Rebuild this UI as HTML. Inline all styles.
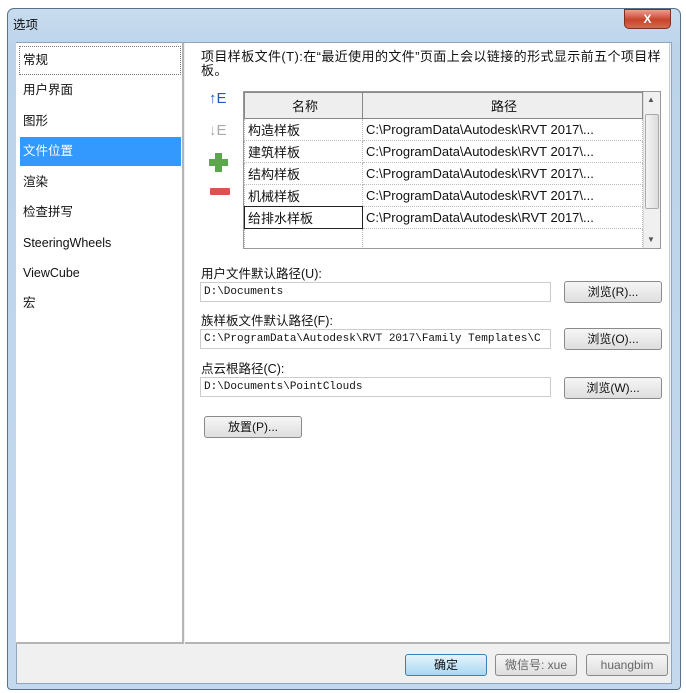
<!DOCTYPE html>
<html><head><meta charset="utf-8"><style>
*{margin:0;padding:0;box-sizing:border-box}
body{width:686px;height:693px;background:#fff;position:relative;overflow:hidden;font-family:"Liberation Sans","Noto Sans CJK SC",sans-serif;font-size:12.5px;color:#111}
.a{position:absolute}
.frame{left:7px;top:8px;width:674px;height:682px;border:1px solid #5a7088;border-radius:7px 7px 4px 4px;background:linear-gradient(#c9dcef,#bcd3ea 40px,#c4d9ee);}
.in{left:16px;top:42px;width:656px;height:642px;background:#f0f0f0;border:1px solid #8ea6bf}
.left{left:16px;top:43px;width:168px;height:601px;background:#fff;border-right:2px solid #b5b5b5;border-bottom:2px solid #b5b5b5}
.right{left:185px;top:43px;width:485px;height:601px;background:#fff;border-bottom:2px solid #b5b5b5;border-right:1px solid #ccc}
.it{position:absolute;left:20px;width:161px;height:29px;line-height:29px;padding-left:3px;font-size:12.5px}
.sel{background:#3399ff;color:#fff}
table{border-collapse:collapse;font-size:13px}
td{height:22px;border:1px dotted #bbb;padding-left:3px;white-space:nowrap;overflow:hidden}
.inp{position:absolute;left:200px;width:351px;height:20px;border:1px solid #ccc;background:#fff;font-family:"Liberation Mono","Noto Serif CJK SC",monospace;font-size:11px;line-height:18px;padding-left:3px;white-space:nowrap;overflow:hidden}
.btn{position:absolute;height:22px;border:1px solid #8a8a8a;border-radius:3px;background:linear-gradient(#f6f6f6,#dedede);text-align:center;line-height:20px;font-size:12px}
.lbl{position:absolute;left:201px;font-size:12.5px}
</style></head><body>
<div class="a frame"></div>
<div class="a" style="left:13px;top:14px;font-size:12.5px">选项</div>
<div class="a" style="left:624px;top:9px;width:47px;height:20px;border-radius:0 0 5px 5px;background:linear-gradient(#e8a090,#c8442c 55%,#d66a50);border:1px solid #7a3020;color:#fff;text-align:center;font-weight:bold;line-height:18px;font-size:12px">X</div>
<div class="a in"></div>
<div class="a left"></div>
<div class="a" style="left:19px;top:46px;width:162px;height:29px;border:1px dotted #777"></div>
<div class="it" style="top:46px">常规</div>
<div class="it" style="top:76px">用户界面</div>
<div class="it" style="top:107px">图形</div>
<div class="it sel" style="top:137px">文件位置</div>
<div class="it" style="top:168px">渲染</div>
<div class="it" style="top:198px">检查拼写</div>
<div class="it" style="top:229px">SteeringWheels</div>
<div class="it" style="top:259px">ViewCube</div>
<div class="it" style="top:289px">宏</div>
<div class="a right"></div>
<div class="a" style="left:201px;top:50px;width:463px;line-height:14px;font-size:13px;letter-spacing:0.4px">项目样板文件(T):在“最近使用的文件”页面上会以链接的形式显示前五个项目样板。</div>
<div class="a" style="left:209px;top:90px;color:#1a5fb4;font-weight:bold;font-size:15px">↑<span style="font-weight:normal">E</span></div>
<div class="a" style="left:209px;top:122px;color:#aaa;font-size:15px">↓E</div>
<div class="a" style="left:209px;top:153px;width:19px;height:19px;background:linear-gradient(#5ba84a,#5ba84a) center/7px 19px no-repeat,linear-gradient(#5ba84a,#5ba84a) center/19px 7px no-repeat"></div>
<div class="a" style="left:210px;top:188px;width:20px;height:7px;background:#d9534f;border-radius:1px"></div>
<div class="a" style="left:243px;top:91px;width:418px;height:158px;border:1px solid #999;background:#fff;overflow:hidden">
<table style="width:399px">
<tr style="background:#eee"><td style="width:118px;height:26px;text-align:center;border:1px solid #888">名称</td><td style="text-align:center;border:1px solid #888">路径</td></tr>
<tr><td>构造样板</td><td>C:\ProgramData\Autodesk\RVT 2017\...</td></tr>
<tr><td>建筑样板</td><td>C:\ProgramData\Autodesk\RVT 2017\...</td></tr>
<tr><td>结构样板</td><td>C:\ProgramData\Autodesk\RVT 2017\...</td></tr>
<tr><td>机械样板</td><td>C:\ProgramData\Autodesk\RVT 2017\...</td></tr>
<tr><td style="border:1px solid #222">给排水样板</td><td>C:\ProgramData\Autodesk\RVT 2017\...</td></tr>
<tr><td style="height:20px"></td><td></td></tr>
</table>
<div class="a" style="left:399px;top:0;width:17px;height:156px;background:#f0f0f0;border-left:1px solid #ddd"></div>
<div class="a" style="left:401px;top:22px;width:14px;height:95px;background:linear-gradient(90deg,#f4f4f4,#dcdcdc);border:1px solid #aaa;border-radius:2px"></div>
<div class="a" style="left:403px;top:3px;font-size:8px;color:#555">▲</div>
<div class="a" style="left:403px;top:143px;font-size:8px;color:#555">▼</div>
</div>
<div class="lbl" style="top:263px">用户文件默认路径(U):</div>
<div class="inp" style="top:282px">D:\Documents</div>
<div class="btn" style="left:564px;top:281px;width:98px">浏览(R)...</div>
<div class="lbl" style="top:310px">族样板文件默认路径(F):</div>
<div class="inp" style="top:329px">C:\ProgramData\Autodesk\RVT 2017\Family Templates\C</div>
<div class="btn" style="left:564px;top:328px;width:98px">浏览(O)...</div>
<div class="lbl" style="top:358px">点云根路径(C):</div>
<div class="inp" style="top:377px">D:\Documents\PointClouds</div>
<div class="btn" style="left:564px;top:377px;width:98px">浏览(W)...</div>
<div class="btn" style="left:204px;top:416px;width:98px">放置(P)...</div>
<div class="btn" style="left:405px;top:654px;width:82px;border-color:#3c7fb1;background:linear-gradient(#e5f4fc,#a8d8f2)">确定</div>
<div class="btn" style="left:495px;top:654px;width:82px;color:#666">微信号: xue</div>
<div class="btn" style="left:586px;top:654px;width:82px;color:#666">huangbim</div>
</body></html>
